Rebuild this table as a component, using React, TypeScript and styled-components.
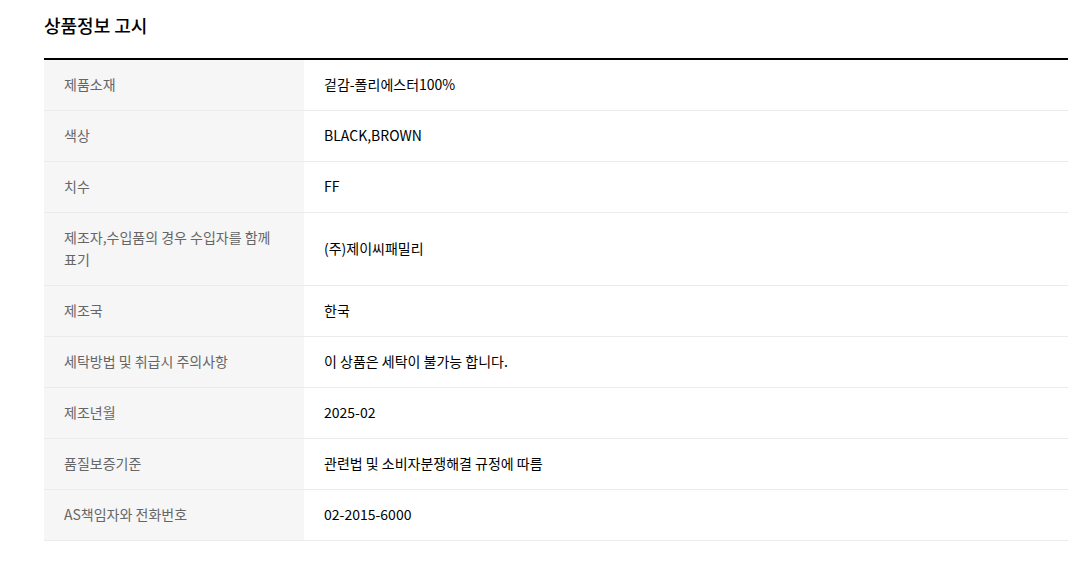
import React from "react";
import styled, { createGlobalStyle } from "styled-components";

const Global = createGlobalStyle`
  html, body { margin: 0; padding: 0; background: #fff; }
  body { font-family: "Noto Sans CJK KR", "Noto Sans", sans-serif; }
`;

const Page = styled.div`
  padding: 9px 5px 0 44px;
`;

const Title = styled.h2`
  margin: 0;
  font-size: 18px;
  font-weight: 500;
  line-height: 32px;
  color: #000;
`;

const Table = styled.table`
  margin-top: 17px;
  width: 100%;
  border-collapse: collapse;
  border-top: 2px solid #000;
  font-size: 14px;
`;

const Row = styled.tr`
  border-bottom: 1px solid #ebebeb;
`;

const Label = styled.th`
  width: 220px;
  padding: 13px 20px 15px;
  background: #f6f6f6;
  color: #666;
  font-weight: 400;
  text-align: left;
  line-height: 22px;
  vertical-align: middle;
  word-break: keep-all;
`;

const Value = styled.td`
  padding: 13px 20px 15px;
  color: #000;
  font-weight: 400;
  line-height: 22px;
  vertical-align: middle;
  word-break: keep-all;
`;

const rows: [string, string][] = [
  ["제품소재", "겉감-폴리에스터100%"],
  ["색상", "BLACK,BROWN"],
  ["치수", "FF"],
  ["제조자,수입품의 경우 수입자를 함께 표기", "(주)제이씨패밀리"],
  ["제조국", "한국"],
  ["세탁방법 및 취급시 주의사항", "이 상품은 세탁이 불가능 합니다."],
  ["제조년월", "2025-02"],
  ["품질보증기준", "관련법 및 소비자분쟁해결 규정에 따름"],
  ["AS책임자와 전화번호", "02-2015-6000"],
];

export default function App() {
  return (
    <>
      <Global />
      <Page>
        <Title>상품정보 고시</Title>
        <Table>
          <tbody>
            {rows.map(([k, v]) => (
              <Row key={k}>
                <Label>{k}</Label>
                <Value>{v}</Value>
              </Row>
            ))}
          </tbody>
        </Table>
      </Page>
    </>
  );
}
